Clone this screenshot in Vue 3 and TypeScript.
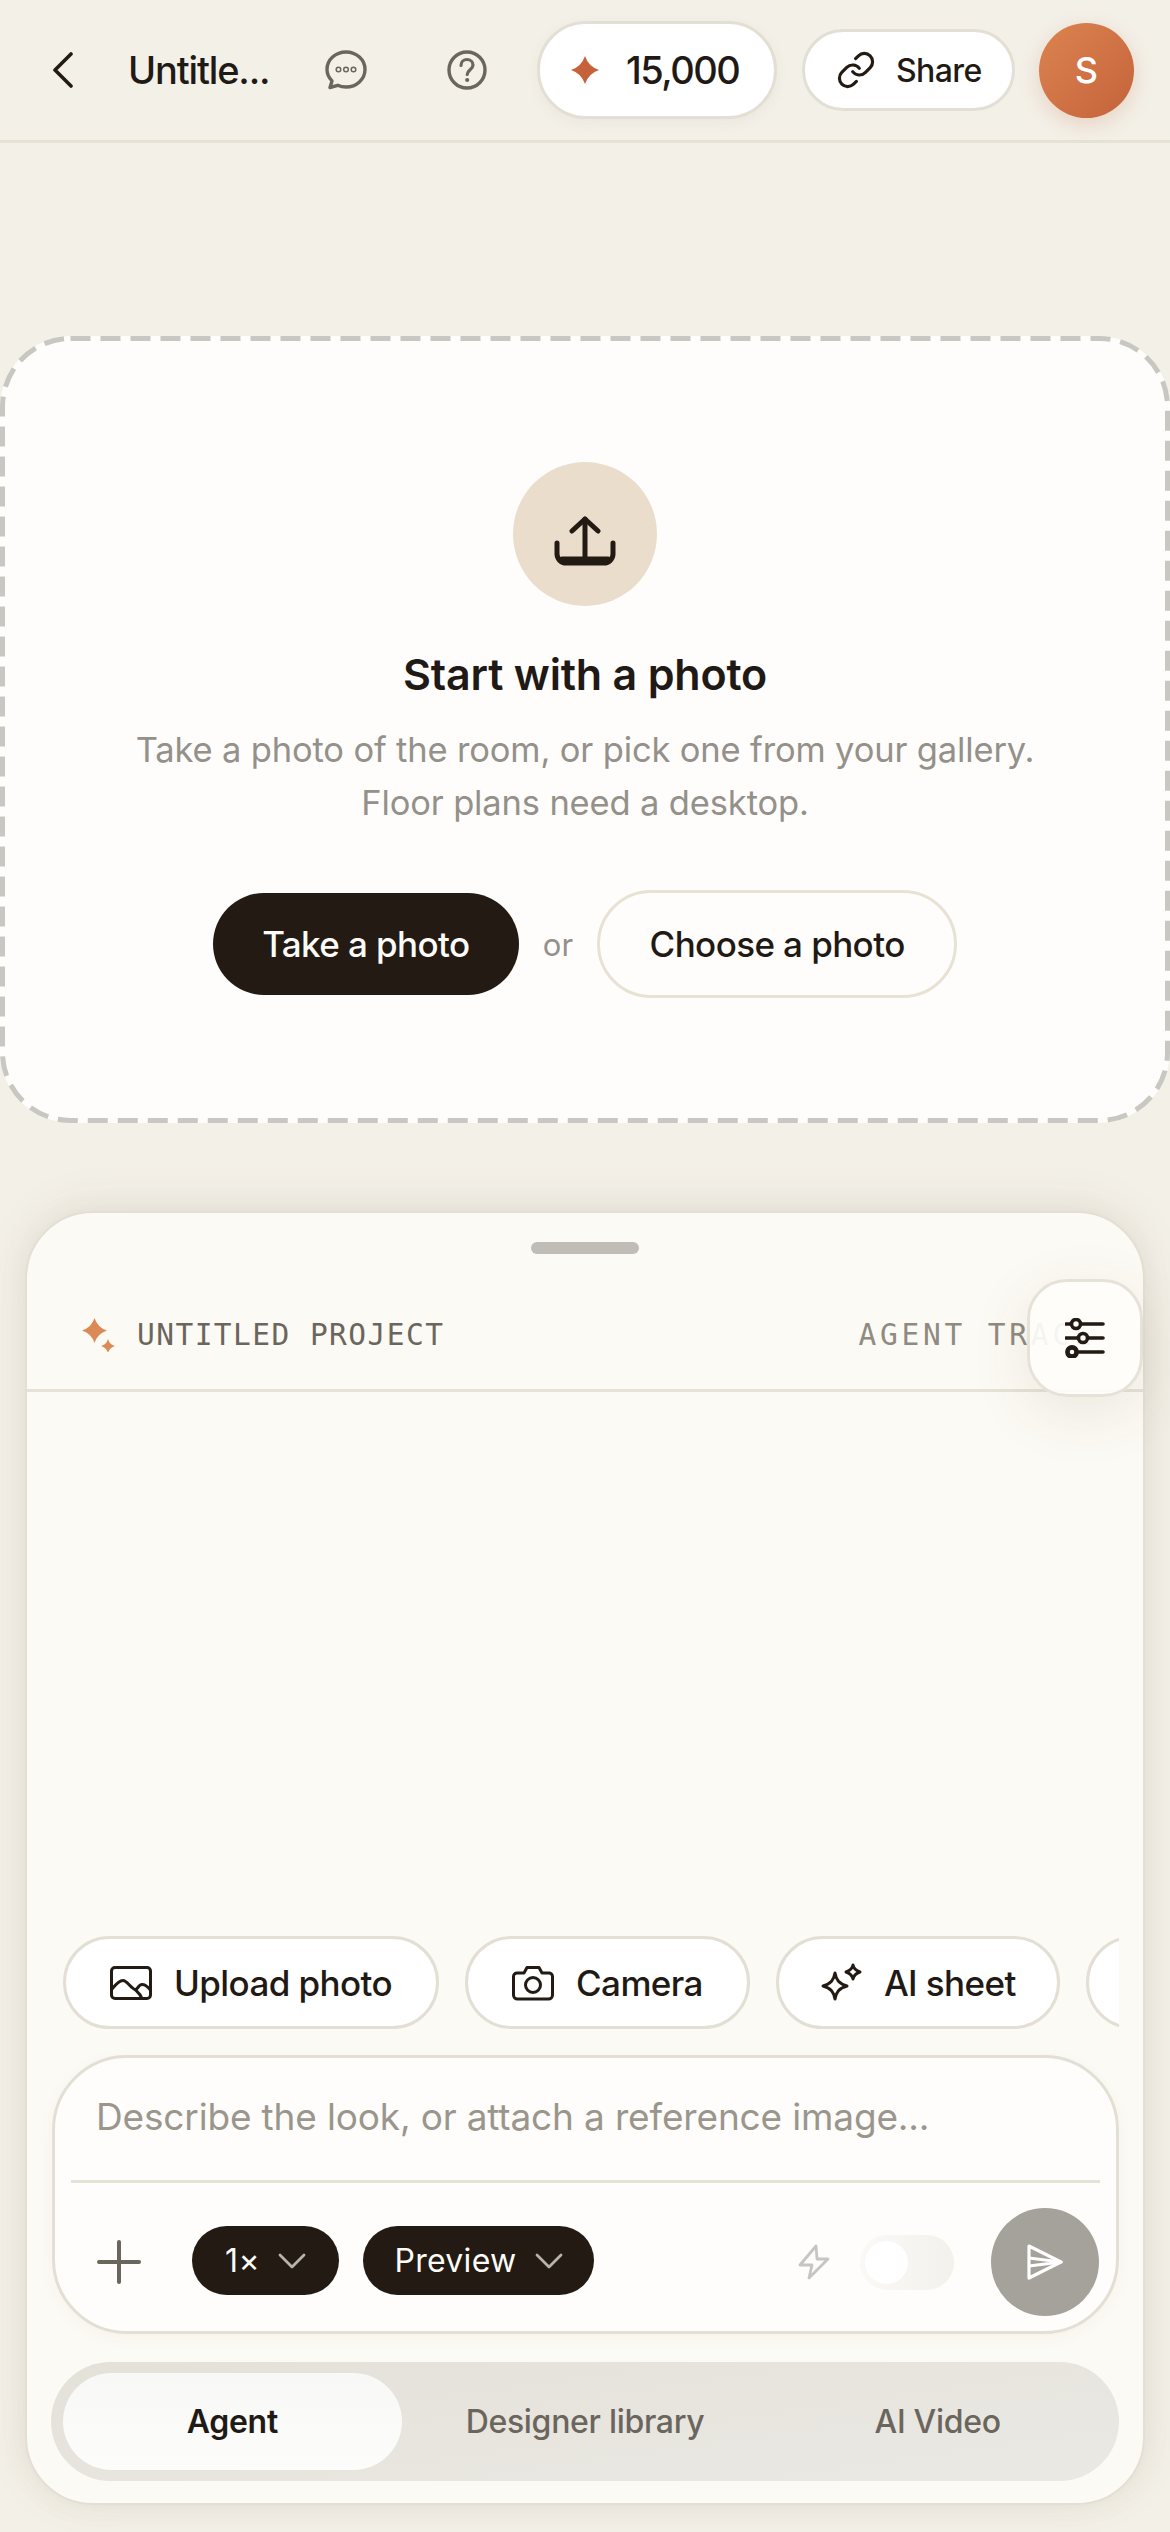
<script setup lang="ts">
const tabs: string[] = ['Agent', 'Designer library', 'AI Video']
</script>

<template>
  <div class="page">
    <header class="top">
      <svg class="back" width="20" height="36" viewBox="0 0 20 36" fill="none"><path d="M18 2 2 18l16 16" stroke="#221a13" stroke-width="3.6" stroke-linecap="round" stroke-linejoin="round"/></svg>
      <span class="title">Untitle...</span>
      <svg class="chat" width="42" height="40" viewBox="0 0 42 40" fill="none"><path d="M21 2c10.500 0 19 7.800 19 17.500S31.500 37 21 37c-3 0-5.800-.6-8.300-1.700L5 37.500l2-6.600C3.900 27.800 2 23.900 2 19.500 2 9.800 10.500 2 21 2Z" stroke="#6b665d" stroke-width="3.400" stroke-linejoin="round"/><circle cx="13.500" cy="19.500" r="2.300" stroke="#6b665d" stroke-width="1.500"/><circle cx="21" cy="19.500" r="2.300" stroke="#6b665d" stroke-width="1.500"/><circle cx="28.500" cy="19.500" r="2.300" stroke="#6b665d" stroke-width="1.500"/></svg>
      <svg class="help" width="40" height="40" viewBox="0 0 40 40" fill="none"><circle cx="20" cy="20" r="18" stroke="#6b665d" stroke-width="3.400"/><path d="M14 15.500c0-3.500 2.700-6 6-6s6 2.400 6 5.500c0 4.500-5.800 5-5.800 9.500" stroke="#6b665d" stroke-width="3.200" stroke-linecap="round"/><circle cx="20.200" cy="30" r="2.100" fill="#6b665d"/></svg>
      <div class="credits">
        <svg width="28" height="28" viewBox="0 0 28 28"><path d="M14 0Q17.500 10.500 28 14 17.500 17.500 14 28 10.500 17.500 0 14 10.500 10.500 14 0Z" fill="#c6623a"/></svg>
        <span>15,000</span>
      </div>
      <div class="share">
        <svg width="40" height="40" viewBox="0 0 24 24" fill="none" stroke="#221a13" stroke-width="1.900" stroke-linecap="round" stroke-linejoin="round"><path d="M10 13a5 5 0 0 0 7.540.54l3-3a5 5 0 0 0-7.070-7.070l-1.720 1.710"/><path d="M14 11a5 5 0 0 0-7.540-.54l-3 3a5 5 0 0 0 7.070 7.070l1.710-1.710"/></svg>
        <span>Share</span>
      </div>
      <div class="avatar">S</div>
    </header>

    <section class="drop">
      <svg class="dash" width="1170" height="787" viewBox="0 0 1170 787" fill="none"><rect x="2.500" y="2.500" width="1165" height="782" rx="68" stroke="#c9c7c1" stroke-width="5" stroke-dasharray="20 10"/></svg>
      <div class="drop-circle">
        <svg width="62" height="50" viewBox="0 0 62 50" fill="none" stroke="#221a13" stroke-width="5" stroke-linecap="round" stroke-linejoin="round"><path d="M3 27v11a9 9 0 0 0 9 9h38a9 9 0 0 0 9-9V27"/><path d="M31 42V3"/><path d="M18 15 31 3l13 12"/><path d="M8 43h46"/></svg>
      </div>
      <h1 class="drop-title">Start with a photo</h1>
      <p class="drop-text">Take a photo of the room, or pick one from your gallery.<br>Floor plans need a desktop.</p>
      <div class="drop-actions">
        <button class="btn-dark">Take a photo</button>
        <span class="or">or</span>
        <button class="btn-light">Choose a photo</button>
      </div>
    </section>

    <section class="panel">
      <div class="handle"></div>
      <div class="panel-head">
        <svg width="34" height="34" viewBox="0 0 34 34"><path d="M12.500 0Q15.500 9.500 25 12.500 15.500 15.500 12.500 25 9.500 15.500 0 12.500 9.500 9.500 12.500 0Z" fill="#dc8a55"/><path d="M26 21Q27.500 26.500 33 28 27.500 29.500 26 35 24.500 29.500 19 28 24.500 26.500 26 21Z" fill="#dc8a55"/></svg>
        <span class="project">UNTITLED PROJECT</span>
        <span class="trace">AGENT TRACE</span>
      </div>
      <div class="filter">
        <svg width="40" height="40" viewBox="0 0 40 40" fill="none" stroke="#221a13" stroke-width="3.600" stroke-linecap="round"><path d="M1 6h37M1 20h37M8 34h30"/><circle cx="11" cy="6" r="4.500" fill="#fefdfa"/><circle cx="18" cy="20" r="4.500" fill="#fefdfa"/><circle cx="7" cy="34" r="4.600" fill="#fefdfa" stroke-width="4.600"/></svg>
      </div>
      <div class="spacer"></div>
      <div class="chips">
        <div class="chip chip-wide">
          <svg width="42" height="34" viewBox="0 0 42 34" fill="none" stroke="#221a13" stroke-width="3" stroke-linejoin="round" stroke-linecap="round"><rect x="1.500" y="1.500" width="39" height="31" rx="3.500"/><path d="M2 23c4-5 8-8.500 11-8.500 4 0 8 8 12 9 3 .6 3-5 7-5 3 0 6 2.500 8 5"/><path d="M25 23.500c2 2 5 4 7 9"/></svg>
          <span>Upload photo</span>
        </div>
        <div class="chip chip-wide">
          <svg width="42" height="36" viewBox="0 0 42 36" fill="none" stroke="#221a13" stroke-width="3" stroke-linejoin="round"><path d="M5 8h7l3-5.500h12L30 8h7a3.500 3.500 0 0 1 3.500 3.500V30a4 4 0 0 1-4 4h-31a4 4 0 0 1-4-4V11.500A3.500 3.500 0 0 1 5 8Z"/><circle cx="21" cy="20" r="7.500"/></svg>
          <span>Camera</span>
        </div>
        <div class="chip chip-ai">
          <svg width="42" height="40" viewBox="0 0 42 40" fill="none" stroke="#221a13" stroke-width="3" stroke-linejoin="round"><path d="M15 10c1.200 7 4 10.800 12 13-8 2.200-10.800 6-12 13-1.200-7-4-10.800-12-13 8-2.200 10.800-6 12-13Z"/><path d="M33 2c.7 3.500 2.500 5.500 7 7-4.500 1.500-6.300 3.500-7 7-.7-3.500-2.500-5.500-7-7 4.500-1.500 6.300-3.500 7-7Z"/></svg>
          <span>AI sheet</span>
        </div>
        <div class="chip chip-cut"></div>
      </div>

      <div class="composer">
        <div class="placeholder">Describe the look, or attach a reference image...</div>
        <div class="composer-row">
          <svg class="plus" width="44" height="44" viewBox="0 0 44 44" fill="none" stroke="#6b665d" stroke-width="4" stroke-linecap="round"><path d="M22 2v40M2 22h40"/></svg>
          <div class="pill pill-a">
            <span>1×</span>
            <svg width="28" height="16" viewBox="0 0 28 16" fill="none" stroke="#b8b3ab" stroke-width="2.800" stroke-linecap="round" stroke-linejoin="round"><path d="m2 2 12 12L26 2"/></svg>
          </div>
          <div class="pill pill-b">
            <span>Preview</span>
            <svg width="28" height="16" viewBox="0 0 28 16" fill="none" stroke="#b8b3ab" stroke-width="2.800" stroke-linecap="round" stroke-linejoin="round"><path d="m2 2 12 12L26 2"/></svg>
          </div>
          <svg class="bolt" width="32" height="36" viewBox="0 0 32 36" fill="none" stroke="#c6c5c1" stroke-width="2.800" stroke-linejoin="round"><path d="M18 2 2 21h12l-3 13 19-19H19l-1-13Z"/></svg>
          <div class="toggle"><div class="knob"></div></div>
          <div class="send">
            <svg width="36" height="36" viewBox="0 0 36 36" fill="none" stroke="#fff" stroke-width="3.200" stroke-linejoin="round"><path d="M2 2 34 18 2 34V2Z"/><path d="M2 14 34 18 2 22"/></svg>
          </div>
        </div>
      </div>

      <div class="tabs">
        <div v-for="(tab, i) in tabs" :key="tab" class="tab" :class="{ active: i === 0 }">{{ tab }}</div>
      </div>
    </section>
  </div>
</template>

<style>
html, body { margin: 0; background: #f3f0e8; }
</style>

<style scoped>
.page {
  width: 1170px;
  height: 2532px;
  overflow: hidden;
  display: flex;
  flex-direction: column;
  background: #f3f0e8;
  font-family: "Inter", "Noto Sans", sans-serif;
  color: #1f1a15;
}
.top {
  height: 143px;
  flex: none;
  box-sizing: border-box;
  border-bottom: 3px solid #e6e2d6;
  display: flex;
  align-items: center;
}
.back { margin-left: 53px; flex: none; }
.title { margin-left: 55px; width: 143px; font-size: 38px; font-weight: 550; white-space: nowrap; letter-spacing: -1.150px; }
.chat { margin-left: 54px; flex: none; }
.help { margin-left: 80px; flex: none; }
.credits {
  margin-left: 50px;
  width: 240px;
  height: 98px;
  flex: none;
  box-sizing: border-box;
  border: 3px solid #e3dfd4;
  border-radius: 49px;
  background: #fff;
  box-shadow: 0 4px 14px rgba(90, 70, 40, .05);
  display: flex;
  align-items: center;
  padding-left: 31px;
  gap: 27px;
  font-size: 38px;
  font-weight: 500;
  letter-spacing: -1.500px;
}
.share {
  margin-left: 25px;
  width: 213px;
  height: 82px;
  flex: none;
  box-sizing: border-box;
  border: 3px solid #e3dfd4;
  border-radius: 41px;
  background: #fff;
  display: flex;
  align-items: center;
  padding-left: 31px;
  gap: 20px;
  font-size: 32px;
  font-weight: 500;
  letter-spacing: -.6px;
}
.avatar {
  margin-left: 24px;
  width: 95px;
  height: 95px;
  flex: none;
  border-radius: 50%;
  background: linear-gradient(135deg, #dc8451, #c4623a);
  box-shadow: 0 6px 20px rgba(198, 98, 58, .22);
  color: #fff;
  font-size: 36px;
  font-weight: 500;
  display: flex;
  align-items: center;
  justify-content: center;
}
.drop {
  position: relative;
  margin-top: 193px;
  height: 787px;
  flex: none;
  box-sizing: border-box;
  border-radius: 72px;
  background: #fefdfb;
  display: flex;
  flex-direction: column;
  align-items: center;
  padding-top: 126px;
}
.dash { position: absolute; left: 0; top: 0; }
.drop-circle {
  width: 144px;
  height: 144px;
  box-sizing: border-box;
  border-radius: 50%;
  background: #eaddcb;
  display: flex;
  align-items: center;
  justify-content: center;
  padding-top: 14px;
}
.drop-title { margin: 42px 0 0; font-size: 43px; line-height: 52px; font-weight: 600; letter-spacing: -.2px; }
.drop-text { margin: 23px 0 0; font-size: 34.500px; line-height: 53px; color: #94908a; text-align: center; letter-spacing: -.15px; }
.drop-actions { margin-top: 61px; display: flex; align-items: center; }
.btn-dark {
  width: 306px;
  height: 102px;
  border: 0;
  border-radius: 51px;
  background: #221a13;
  color: #fdfbf7;
  font: 500 35px "Inter", sans-serif;
  letter-spacing: -.6px;
}
.or { margin: 0 24px; font-size: 31px; color: #94908a; }
.btn-light {
  width: 360px;
  height: 108px;
  box-sizing: border-box;
  border: 3px solid #e8e2d4;
  border-radius: 54px;
  background: #fefdfb;
  color: #1f1a15;
  font: 500 35px "Inter", sans-serif;
  letter-spacing: -.6px;
}
.panel {
  position: relative;
  margin: 88px 25px 0;
  height: 1294px;
  flex: none;
  box-sizing: border-box;
  border: 2px solid #e3dfd5;
  border-radius: 68px;
  background: #fcfaf4;
  box-shadow: 0 -6px 50px rgba(90, 70, 40, .07), 0 0 30px rgba(90, 70, 40, .06);
  display: flex;
  flex-direction: column;
}
.handle {
  align-self: center;
  width: 108px;
  height: 12px;
  margin-top: 29px;
  border-radius: 6px;
  background: #c0bdb6;
  flex: none;
}
.panel-head {
  height: 138px;
  flex: none;
  box-sizing: border-box;
  border-bottom: 3px solid #e6e2d8;
  display: flex;
  align-items: center;
  padding: 26px 0 0 55px;
  overflow: hidden;
  white-space: nowrap;
}
.project {
  margin-left: 21px;
  font-family: "DejaVu Sans Mono", "Liberation Mono", monospace;
  font-size: 29.500px;
  letter-spacing: 1.450px;
  color: #6b665d;
}
.trace {
  margin-left: 414px;
  font-family: "DejaVu Sans Mono", "Liberation Mono", monospace;
  font-size: 29.500px;
  letter-spacing: 3.800px;
  color: #8f8b82;
}
.filter {
  position: absolute;
  top: 66px;
  right: 0;
  width: 116px;
  height: 118px;
  box-sizing: border-box;
  border: 3px solid #e6e2d8;
  border-radius: 40px;
  background: rgba(254, 253, 250, .92);
  box-shadow: 0 16px 60px rgba(90, 70, 40, .1);
  display: flex;
  align-items: center;
  justify-content: center;
}
.spacer { flex: 1; }
.chips {
  margin: 0 24px 0 36px;
  display: flex;
  gap: 26px;
  overflow: hidden;
  flex: none;
}
.chip {
  height: 93px;
  flex: none;
  box-sizing: border-box;
  border: 3px solid #e3dfd4;
  border-radius: 47px;
  background: #fff;
  display: flex;
  align-items: center;
  justify-content: center;
  gap: 22px;
  padding: 0 43px;
  font-size: 35px;
  font-weight: 500;
  letter-spacing: -.6px;
}
.chip-wide { padding: 0 44px; }
.chip-ai { padding: 0 41px; }
.chip span { white-space: nowrap; }
.chip-cut { width: 200px; }
.composer {
  margin: 26px 24px 0 25px;
  height: 279px;
  flex: none;
  box-sizing: border-box;
  border: 3px solid #e3dfd4;
  border-radius: 75px;
  background: #fefdfb;
  box-shadow: 0 4px 16px rgba(90, 70, 40, .04);
  display: flex;
  flex-direction: column;
}
.placeholder {
  margin: 0 16px;
  height: 125px;
  flex: none;
  box-sizing: border-box;
  border-bottom: 3px solid #e6e2d8;
  padding: 34px 0 0 25px;
  font-size: 37px;
  line-height: 50px;
  color: #9a968c;
  letter-spacing: -.16px;
  white-space: nowrap;
}
.composer-row {
  flex: 1;
  display: flex;
  align-items: center;
  padding: 10px 17px 0 42px;
}
.plus { flex: none; }
.pill {
  height: 69px;
  border-radius: 35px;
  background: #221a13;
  color: #fdfbf7;
  font-size: 32px;
  letter-spacing: .3px;
  display: flex;
  align-items: center;
  justify-content: center;
  gap: 18px;
  flex: none;
  margin-bottom: 3px;
}
.pill-a { width: 147px; margin-left: 51px; }
.pill-b { width: 231px; margin-left: 24px; }
.bolt { margin-left: auto; flex: none; }
.toggle {
  margin-left: 30px;
  width: 94px;
  height: 55px;
  border-radius: 28px;
  background: linear-gradient(90deg, #fbf9f6, #f3f1ec);
  display: flex;
  align-items: center;
  padding-left: 5px;
  box-sizing: border-box;
  flex: none;
}
.knob { width: 43px; height: 43px; border-radius: 50%; background: #fff; }
.send {
  margin-left: 37px;
  width: 108px;
  height: 108px;
  border-radius: 50%;
  background: #a5a29b;
  display: flex;
  align-items: center;
  justify-content: center;
  flex: none;
}
.tabs {
  margin: 28px 24px 22px 24px;
  height: 119px;
  flex: none;
  box-sizing: border-box;
  border-radius: 60px;
  background: linear-gradient(172deg, #e4e1d9, #ebe9e4);
  display: flex;
  align-items: center;
  gap: 14px;
  padding: 0 12px;
}
.tab {
  flex: 1;
  height: 97px;
  border-radius: 49px;
  display: flex;
  align-items: center;
  justify-content: center;
  font-size: 32px;
  font-weight: 500;
  color: #6b665d;
  letter-spacing: -.3px;
}
.tab.active {
  background: linear-gradient(180deg, #f8f8f6, #fcfcfb);
  color: #1f1a15;
  font-weight: 600;
}
</style>
